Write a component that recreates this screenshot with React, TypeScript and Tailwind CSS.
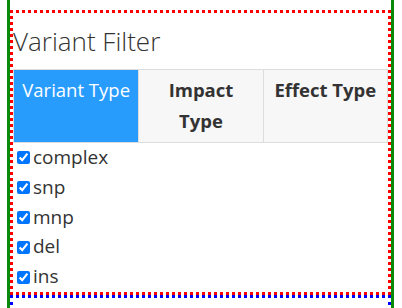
const variantTypes = ["complex", "snp", "mnp", "del", "ins"]

export default function App() {
  return (
    <div className="h-[308px] overflow-hidden bg-white text-[#333] font-['Open_Sans',sans-serif]">
      {/* outer frame */}
      <div className="ml-[7px] mr-[8px] h-[308px] border-x-[3px] border-solid border-[#0a8a0a] pt-[10px]">
        {/* filter panel */}
        <div className="border-[3px] border-dotted border-[#ff0000]">
          <h2 className="h-[56px] text-[26px] font-light leading-[56px] text-[#333]">
            Variant Filter
          </h2>

          {/* tabs */}
          <div className="grid grid-cols-3 border border-[#dddddd] text-[18.5px] leading-[30.5px]">
            <div className="bg-[#279cfc] px-2 pt-[5px] pb-[6px] text-center text-white">
              Variant Type
            </div>
            <div className="border-l border-[#dddddd] bg-[#f7f7f7] px-2 pt-[5px] pb-[6px] text-center font-bold text-[#333]">
              Impact Type
            </div>
            <div className="border-l border-[#dddddd] bg-[#f7f7f7] px-2 pt-[5px] pb-[6px] text-center font-bold text-[#333]">
              Effect Type
            </div>
          </div>

          {/* options */}
          <div className="text-[19px] leading-[29.8px]">
            {variantTypes.map((type) => (
              <label key={type} className="flex items-center">
                <input
                  type="checkbox"
                  defaultChecked
                  className="ml-[4px] mr-[3px] h-[13px] w-[13px]"
                />
                <span>{type}</span>
              </label>
            ))}
          </div>
        </div>

        {/* next panel */}
        <div className="h-[40px] border-[3px] border-dotted border-[#0000ff]" />
      </div>
    </div>
  )
}
